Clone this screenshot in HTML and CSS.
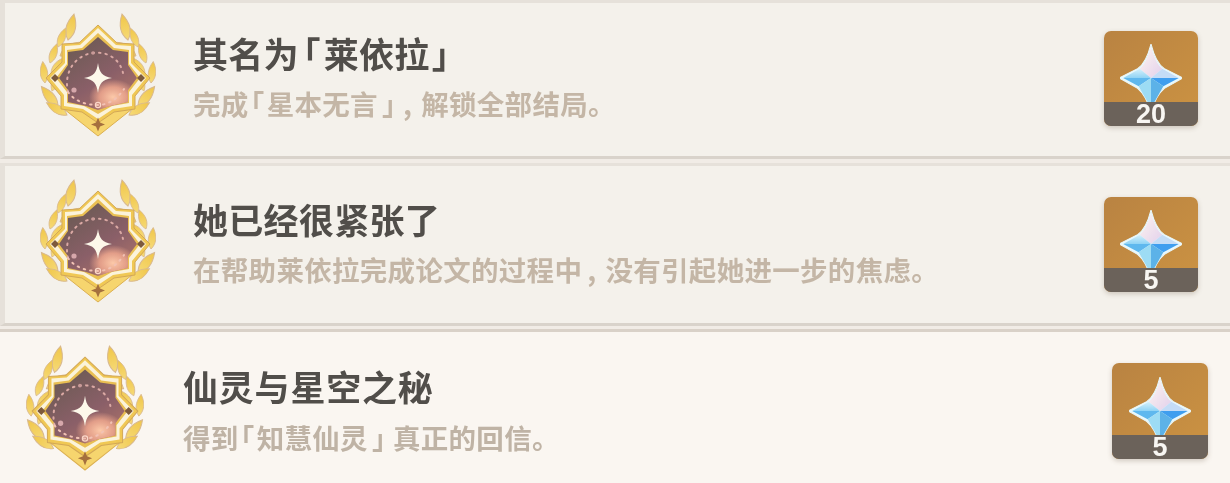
FILE: index.html
```html
<!DOCTYPE html>
<html lang="zh-CN">
<head>
    <meta charset="UTF-8">
    <title>成就</title>
    <link rel="stylesheet" href="styles.css">
</head>
<body>
    <svg class="defs" width="0" height="0" aria-hidden="true">
        <defs>
            <linearGradient id="sky" x1="0.15" y1="0.1" x2="0.75" y2="0.95">
                <stop offset="0" stop-color="#6c5a54"/>
                <stop offset="0.6" stop-color="#8a5f68"/>
                <stop offset="1" stop-color="#a87068"/>
            </linearGradient>
            <radialGradient id="glow" cx="0.5" cy="0.5" r="0.5">
                <stop offset="0" stop-color="#fcc9a9"/>
                <stop offset="0.55" stop-color="#efa78e" stop-opacity="0.85"/>
                <stop offset="1" stop-color="#eda68e" stop-opacity="0"/>
            </radialGradient>
            <clipPath id="skyClip">
                <path d="M58 24L73 37L88 39V52L97 65L88 77V89L70 93L58 97L46 93L28 89V77L19 65L28 52V39L43 37Z"/>
            </clipPath>
            <linearGradient id="leafFill" x1="0" y1="1" x2="0" y2="0">
                <stop offset="0" stop-color="#f6da78"/>
                <stop offset="1" stop-color="#f0c648"/>
            </linearGradient>
            <linearGradient id="gemTop" x1="0" y1="0" x2="1" y2="1">
                <stop offset="0" stop-color="#fff5ef"/>
                <stop offset="1" stop-color="#e2d0ec"/>
            </linearGradient>
            <linearGradient id="gemWing" x1="0" y1="0" x2="0" y2="1">
                <stop offset="0" stop-color="#d6f1fb"/>
                <stop offset="1" stop-color="#8fd3f5"/>
            </linearGradient>
            <g id="leaf">
                <path d="M0 0C-5 -6 -6 -14 0 -24C6 -14 5 -6 0 0Z" fill="url(#leafFill)" stroke="#d8b88e" stroke-width="0.9"/>
            </g>
            <g id="branch">
                <use href="#leaf" transform="translate(12 78) rotate(20) scale(.8)"/>
                <use href="#leaf" transform="translate(11 60) rotate(45) scale(.95)"/>
                <use href="#leaf" transform="translate(20 43) rotate(55)"/>
                <use href="#leaf" transform="translate(28 27) rotate(13) scale(1.11)"/>
                <use href="#leaf" transform="translate(18 34) rotate(22) scale(.85)"/>
                <use href="#leaf" transform="translate(10 50) rotate(20) scale(.85)"/>
                <use href="#leaf" transform="translate(5 70) rotate(-6) scale(.9)"/>
                <use href="#leaf" transform="translate(18 94) rotate(-39) scale(1.1)"/>
                <use href="#leaf" transform="translate(27 102) rotate(-59)"/>
            </g>
            <g id="medal">
                <use href="#branch"/>
                <use href="#branch" transform="translate(116 0) scale(-1 1)"/>
                <path d="M24 96L58 123L92 96L88 92L58 100L28 92Z" fill="#f6d56e" stroke="#dcb051" stroke-width="1"/>
                <path d="M58 12L77 30L94 31V49L110 65L95 83V96L74 99L58 110L42 99L21 96V83L6 65L22 49V31L39 30Z" fill="#f0c854" stroke="#d3a857" stroke-width="1"/>
                <path d="M58 15L76 32L91 33V50L106 65L92 82V93L73 96L58 106L43 96L24 93V82L10 65L25 50V33L40 32Z" fill="#fbf3da"/>
                <path d="M58 20L74 35L89 37V51L100 65L89 79V90L72 93L58 101L44 93L27 90V79L16 65L27 51V37L42 35Z" fill="#e9bf52"/>
                <path d="M58 24L73 37L88 39V52L97 65L88 77V89L70 93L58 97L46 93L28 89V77L19 65L28 52V39L43 37Z" fill="url(#sky)"/>
                <g clip-path="url(#skyClip)">
                    <ellipse cx="73" cy="84" rx="24" ry="18" fill="url(#glow)"/>
                </g>
                <path d="M28 79C24 62 32 46 48 41C66 36 80 46 83 60" fill="none" stroke="#dba9a4" stroke-width="2" stroke-dasharray="1.5 5" stroke-linecap="round"/>
                <path d="M28 79C34 88 46 92 58 92C66 92 76 88 84 76" fill="none" stroke="#f2c2b4" stroke-width="2" stroke-dasharray="1.5 5" stroke-linecap="round"/>
                <circle cx="34" cy="77" r="2.6" fill="#d6a7ab"/>
                <circle cx="53" cy="40" r="1.8" fill="#c99a98"/>
                <circle cx="58" cy="92" r="2.6" fill="none" stroke="#fbd7c8" stroke-width="1.2"/>
                <path d="M58 50C59.500 60 62 63 72 65C62 67 59.500 70 58 80C56.500 70 54 67 44 65C54 63 56.500 60 58 50Z" fill="#fdf8ea"/>
                <path d="M58 104.500L60 109.500L65 111.500L60 113.500L58 118.500L56 113.500L51 111.500L56 109.500Z" fill="#a5703e"/>
                <path d="M15 61l4 4 -4 4 -4 -4Z" fill="#7d5a3c"/>
                <path d="M101 61l4 4 -4 4 -4 -4Z" fill="#7d5a3c"/>
            </g>
            <g id="gem">
                <path d="M30 0C33 12 37 20 43 24L61 33L43 43C37 48 33 56 30 66C27 56 23 48 17 43L-1 33L17 24C23 20 27 12 30 0Z" fill="#e9f9fd" stroke="#e9f9fd" stroke-width="1"/>
                <path d="M30 3C33 13 36 20 41 24L30 33L19 24C24 20 27 13 30 3Z" fill="url(#gemTop)"/>
                <path d="M19 24L3 33L30 33Z" fill="url(#gemWing)"/>
                <path d="M41 24L57 33L30 33Z" fill="#c4dcf6"/>
                <path d="M3 33L18 41L30 33Z" fill="#5fb8ee"/>
                <path d="M57 33L42 41L30 33Z" fill="#3f9eef"/>
                <path d="M18 41L30 62L30 33Z" fill="#9ddcf4"/>
                <path d="M42 41L30 62L30 33Z" fill="#5cb2e8"/>
            </g>
        </defs>
    </svg>

    <div class="achievement first">
        <svg class="medal" viewBox="0 0 116 124"><use href="#medal"/></svg>
        <div class="info">
            <div class="name">其名为<span class="open">「</span>莱依拉<span class="close">」</span></div>
            <div class="desc">完成<span class="open">「</span>星本无言<span class="close">」</span><span class="comma">,</span>解锁全部结局。</div>
        </div>
        <div class="reward">
            <svg class="gem" viewBox="0 0 60 66"><use href="#gem"/></svg>
            <div class="count">20</div>
        </div>
    </div>

    <div class="achievement second">
        <svg class="medal" viewBox="0 0 116 124"><use href="#medal"/></svg>
        <div class="info">
            <div class="name">她已经很紧张了</div>
            <div class="desc">在帮助莱依拉完成论文的过程中<span class="comma">,</span>没有引起她进一步的焦虑。</div>
        </div>
        <div class="reward">
            <svg class="gem" viewBox="0 0 60 66"><use href="#gem"/></svg>
            <div class="count">5</div>
        </div>
    </div>

    <div class="achievement plain">
        <svg class="medal" viewBox="0 0 116 124"><use href="#medal"/></svg>
        <div class="info">
            <div class="name">仙灵与星空之秘</div>
            <div class="desc">得到<span class="open">「</span>知慧仙灵<span class="close">」</span>真正的回信。</div>
        </div>
        <div class="reward">
            <svg class="gem" viewBox="0 0 60 66"><use href="#gem"/></svg>
            <div class="count">5</div>
        </div>
    </div>
</body>
</html>
```

FILE: styles.css
```css
html, body {
    margin: 0;
    height: 483px;
    overflow: hidden;
}
body {
    background-color: #f1ece6;
    font-family: "Noto Sans CJK SC", "Noto Sans", sans-serif;
}
.defs {
    display: block;
    height: 0;
}
.achievement {
    display: flex;
    align-items: flex-start;
    box-sizing: border-box;
    padding: 13px 32px 0 35px;
    background-color: #f4f1eb;
    border-style: solid;
    border-color: #e6e1da;
    border-width: 3px 0 3px 5px;
    border-bottom-color: #d9d3cb;
    filter: blur(0.4px);
}
.first {
    height: 159px;
    padding-top: 10px;
}
.second {
    height: 163px;
    margin-top: 4px;
}
.plain {
    height: 154px;
    margin-top: 3px;
    padding: 13px 22px 0 26px;
    background-color: #faf6f1;
    border-width: 3px 0 0;
    border-color: #d9d1c8;
}
.medal {
    width: 116px;
    height: 124px;
    flex: none;
}
.plain .medal {
    width: 118px;
    height: 126px;
}
.info {
    flex: 1;
    margin: 20px 0 0 37px;
}
.plain .info {
    margin: 21px 0 0 39px;
}
.name {
    font-size: 35px;
    line-height: 40px;
    letter-spacing: 0.3px;
    font-weight: 700;
    color: #514e4a;
    white-space: nowrap;
}
.plain .name {
    letter-spacing: 0.8px;
}
.desc {
    margin-top: 14px;
    font-size: 27.5px;
    line-height: 32px;
    letter-spacing: 0.3px;
    font-weight: 700;
    color: #c4b6a6;
    white-space: nowrap;
}
.plain .desc {
    margin-top: 15px;
    color: #bfb3a5;
}
/* brackets take half a cell, like the game font */
.open, .close {
    font-feature-settings: "halt";
}
.name .open {
    margin: 0 3px 0 4px;
}
.name .close {
    margin: 0 3px 0 2px;
}
.desc .open {
    margin: 0 2px;
}
.desc .close {
    margin: 0 2px 0 4px;
}
.plain .desc .close {
    margin-right: 7px;
}
.comma {
    margin: 0 9px 0 5px;
}
.reward {
    display: flex;
    flex-direction: column;
    justify-content: flex-end;
    position: relative;
    box-sizing: border-box;
    width: 94px;
    height: 95px;
    flex: none;
    margin-top: 18px;
    border-radius: 7px;
    background: linear-gradient(135deg, #b98342, #cc9342);
    box-shadow: 0 2px 5px rgba(90, 70, 50, 0.25);
}
.plain .reward {
    width: 96px;
    height: 96px;
}
.gem {
    position: absolute;
    left: 16px;
    top: 13px;
    width: 62px;
    height: 68px;
}
.plain .gem {
    left: 17px;
    top: 14px;
}
.count {
    position: relative;
    height: 24px;
    line-height: 24px;
    border-radius: 0 0 7px 7px;
    background-color: #6b625a;
    color: #f8f6f2;
    font-family: "Liberation Sans", sans-serif;
    font-size: 27px;
    font-weight: 700;
    text-align: center;
}
```
